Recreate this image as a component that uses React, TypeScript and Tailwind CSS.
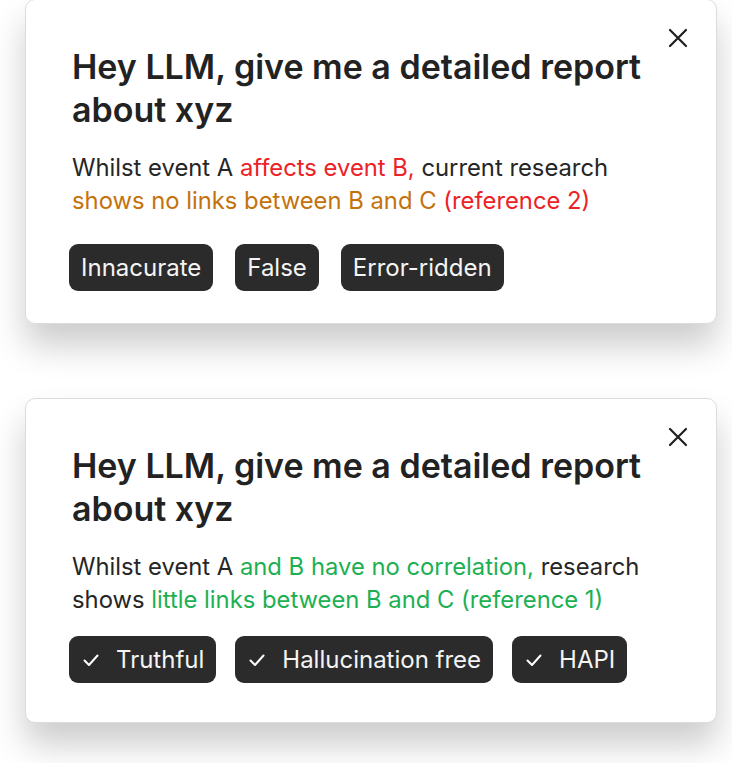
import React from "react";

function XIcon() {
  return (
    <svg width="22" height="22" viewBox="0 0 22 22" fill="none" stroke="#1f1f1f" strokeWidth="2.2" strokeLinecap="round">
      <path d="M3 3L19 19M19 3L3 19" />
    </svg>
  );
}

function Check() {
  return (
    <svg width="20" height="20" viewBox="0 0 20 20" fill="none" stroke="#ffffff" strokeWidth="2" strokeLinecap="round" strokeLinejoin="round">
      <path d="M3.5 10.5L8 15L16.5 5.5" />
    </svg>
  );
}

function Tag({ label, check }: { label: string; check?: boolean }) {
  return (
    <div className="flex h-[47px] items-center gap-[15px] rounded-[9px] bg-[#2b2b2b] px-[12px] text-[24px] text-[#f4f4f4]">
      {check && <Check />}
      <span>{label}</span>
    </div>
  );
}

function Card({ children, tags, tagRow }: { children: React.ReactNode; tags: React.ReactNode; tagRow: string }) {
  return (
    <div className="relative h-[325px] w-[692px] rounded-[10px] border border-[#dcdcdc] bg-white pl-[43px] pt-[45px] shadow-[0_22px_34px_rgba(0,0,0,0.2)]">
      <div className="absolute right-[27px] top-[27px]">
        <XIcon />
      </div>
      <h1 className="pl-[3px] text-[34px] font-semibold leading-[43px] text-[#222222]">
        Hey LLM, give me a detailed report
        <br />
        about xyz
      </h1>
      <p className="mt-[20px] pl-[3px] text-[23.8px] leading-[33px] text-[#262626]">{children}</p>
      <div className={tagRow}>{tags}</div>
    </div>
  );
}

export default function App() {
  return (
    <div
      className="h-[763px] w-[732px] overflow-hidden bg-white pl-[25px] pt-0"
      style={{ fontFamily: "Inter, 'Noto Sans', sans-serif" }}
    >
      <div className="-mt-[1px] flex flex-col gap-[74px]">
        <Card
          tagRow="mt-[27px] flex gap-[22px]"
          tags={
            <>
              <Tag label="Innacurate" />
              <Tag label="False" />
              <Tag label="Error-ridden" />
            </>
          }
        >
          Whilst event A <span className="text-[#ec2226]">affects event B,</span> current research
          <br />
          <span className="text-[#c4720c]">shows no links between B and C</span>{" "}
          <span className="text-[#ec2226]">(reference 2)</span>
        </Card>
        <Card
          tagRow="mt-[20px] flex gap-[19px]"
          tags={
            <>
              <Tag label="Truthful" check />
              <Tag label="Hallucination free" check />
              <Tag label="HAPI" check />
            </>
          }
        >
          Whilst event A <span className="text-[#1db053]">and B have no correlation,</span> research
          <br />
          shows <span className="text-[#1db053]">little links between B and C (reference 1)</span>
        </Card>
      </div>
    </div>
  );
}
